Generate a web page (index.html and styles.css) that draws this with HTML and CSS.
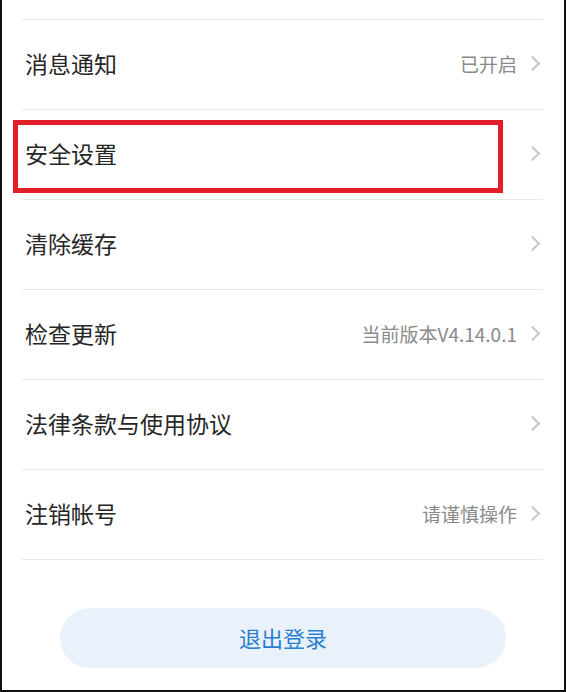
FILE: index.html
```html
<!DOCTYPE html>
<html lang="zh-CN">
<head>
    <meta charset="UTF-8">
    <meta name="viewport" content="width=device-width, initial-scale=1.0">
    <title>设置</title>
    <link rel="stylesheet" href="styles.css">
</head>
<body>
    <div class="screen">
        <!-- 设置列表 -->
        <ul class="setting-list">
            <li class="setting-item">
                <span class="item-label">消息通知</span>
                <span class="item-extra">已开启<i class="chevron"></i></span>
            </li>
            <li class="setting-item">
                <span class="item-label">安全设置</span>
                <span class="item-extra"><i class="chevron"></i></span>
            </li>
            <li class="setting-item">
                <span class="item-label">清除缓存</span>
                <span class="item-extra"><i class="chevron"></i></span>
            </li>
            <li class="setting-item">
                <span class="item-label">检查更新</span>
                <span class="item-extra">当前版本V4.14.0.1<i class="chevron"></i></span>
            </li>
            <li class="setting-item">
                <span class="item-label">法律条款与使用协议</span>
                <span class="item-extra"><i class="chevron"></i></span>
            </li>
            <li class="setting-item">
                <span class="item-label">注销帐号</span>
                <span class="item-extra">请谨慎操作<i class="chevron"></i></span>
            </li>
        </ul>

        <!-- 退出按钮 -->
        <div class="logout-wrap">
            <button class="logout-btn">退出登录</button>
        </div>

        <!-- 标注框 -->
        <div class="highlight-box"></div>
    </div>
</body>
</html>
```

FILE: styles.css
```css
* {
    margin: 0;
    padding: 0;
    box-sizing: border-box;
}

body {
    background: #fff;
    font-family: "Noto Sans CJK SC", "Noto Sans", sans-serif;
    width: 566px;
    height: 692px;
    overflow: hidden;
}

/* 外框 */
.screen {
    position: relative;
    width: 566px;
    height: 692px;
    border-left: 2px solid #111;
    border-right: 2px solid #111;
    border-bottom: 2px solid #111;
    background: #fff;
}

.setting-list {
    list-style: none;
    margin: 0 21px 0 20px;
    padding-top: 19px;
    border-bottom: 1px solid #e8e8e8;
}

.setting-item {
    display: flex;
    align-items: center;
    justify-content: space-between;
    height: 90px;
    padding: 0 0 3px 3px;
    border-top: 1px solid #e8e8e8;
}

.item-label {
    font-size: 23px;
    line-height: 1;
    color: #262626;
}

.item-extra {
    display: flex;
    align-items: center;
    font-size: 19px;
    line-height: 1;
    color: #8a8a8a;
}

/* 右箭头 */
.chevron {
    display: inline-block;
    width: 11px;
    height: 11px;
    margin-left: 10px;
    margin-right: 5px;
    border-top: 2px solid #c8c8c8;
    border-right: 2px solid #c8c8c8;
    transform: rotate(45deg);
}

.logout-wrap {
    display: flex;
    justify-content: center;
    padding-top: 48px;
}

.logout-btn {
    width: 446px;
    height: 60px;
    border: none;
    border-radius: 30px;
    background: #e9f1fb;
    color: #2a80cf;
    font-family: inherit;
    font-size: 22px;
    line-height: 1;
    padding-bottom: 2px;
}

/* 红色标注框 */
.highlight-box {
    position: absolute;
    left: 11px;
    top: 120px;
    width: 490px;
    height: 73px;
    border: 5px solid #e11d2a;
}
```
